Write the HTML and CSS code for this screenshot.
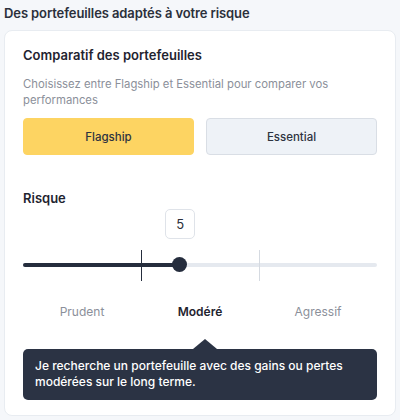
FILE: index.html
```html
<!DOCTYPE html>
<html lang="fr">
<head>
  <meta charset="UTF-8">
  <meta name="viewport" content="width=device-width, initial-scale=1.0">
  <title>Portefeuilles</title>
  <link rel="stylesheet" href="styles.css">
</head>
<body>
<h2 class="page-title">Des portefeuilles adaptés à votre risque</h2>
<div class="card">
  <h3 class="card-title">Comparatif des portefeuilles</h3>
  <p class="desc">Choisissez entre Flagship et Essential pour comparer vos performances</p>
  <div class="choices">
    <button class="choice active">Flagship</button>
    <button class="choice">Essential</button>
  </div>

  <h4 class="risk-title">Risque</h4>
  <div class="value-row">
    <div class="value" style="left: 44.44%;">5</div>
  </div>
  <div class="slider">
    <div class="track"></div>
    <div class="fill" style="width: 44.44%;"></div>
    <div class="tick dark" style="left: 33.33%;"></div>
    <div class="tick" style="left: 66.66%;"></div>
    <div class="thumb" style="left: 44.44%;"></div>
  </div>
  <div class="labels">
    <span>Prudent</span>
    <span class="current">Modéré</span>
    <span>Agressif</span>
  </div>
  <div class="tooltip">
    Je recherche un portefeuille avec des gains ou pertes modérées sur le long terme.
  </div>
</div>
</body>
</html>
```

FILE: styles.css
```css
body {
  margin: 0;
  padding: 0 4px;
  font-family: Inter, "Noto Sans", sans-serif;
  background-color: #f5f7fa;
  color: #2b303b;
}
.page-title {
  margin: 0;
  padding: 5px 0 0 0;
  height: 25px;
  font-size: 13px;
  font-weight: 600;
  letter-spacing: -0.1px;
}
.card {
  background: #fff;
  border: 1px solid #e8ecf1;
  border-radius: 8px;
  padding: 16px 18px 14px 18px;
  height: 354px;
}
.card-title {
  margin: 0;
  font-size: 13px;
  font-weight: 600;
  color: #1f2430;
}
.desc {
  margin: 13px 0 0 0;
  font-size: 11.3px;
  line-height: 16px;
  color: #8b909a;
}
.choices {
  display: grid;
  grid-template-columns: 1fr 1fr;
  gap: 12px;
  margin-top: 10px;
}
.choice {
  height: 37px;
  font-family: inherit;
  font-size: 11.5px;
  font-weight: 500;
  color: #2d3340;
  background-color: #eef2f7;
  border: 1px solid #d9dee5;
  border-radius: 4px;
}
.choice.active {
  background-color: #fdd462;
  border-color: #fdd462;
}
.risk-title {
  margin: 35px 0 0 0;
  font-size: 13px;
  font-weight: 600;
  color: #1f2430;
}
.value-row {
  position: relative;
  height: 30px;
  margin-top: 3px;
}
.value {
  position: absolute;
  top: 0;
  width: 28px;
  height: 28px;
  margin-left: -15px;
  border: 1px solid #dfe3e9;
  border-radius: 5px;
  text-align: center;
  line-height: 28px;
  font-size: 13px;
}
.slider {
  position: relative;
  height: 48px;
  margin-top: 2px;
}
.track, .fill {
  position: absolute;
  left: 0;
  top: 22px;
  height: 4px;
  border-radius: 2px;
}
.track {
  right: 0;
  background-color: #e5e9ef;
}
.fill {
  background-color: #252d3d;
}
.tick {
  position: absolute;
  top: 9px;
  width: 1px;
  height: 31px;
  background-color: #d5dae1;
}
.tick.dark {
  background-color: #252d3d;
}
.thumb {
  position: absolute;
  top: 16px;
  width: 15px;
  height: 15px;
  margin-left: -8px;
  border-radius: 50%;
  background-color: #252d3d;
}
.labels {
  display: grid;
  grid-template-columns: 1fr 1fr 1fr;
  text-align: center;
  font-size: 12px;
  color: #8b909a;
  margin-top: 15px;
}
.labels .current {
  color: #1f2430;
  font-weight: 600;
}
.tooltip {
  position: relative;
  margin-top: 30px;
  background-color: #2b3344;
  color: #fff;
  border-radius: 5px;
  padding: 9px 12px 10px 12px;
  font-size: 12px;
  font-weight: 500;
  line-height: 16px;
}
.tooltip::before {
  content: "";
  position: absolute;
  top: -10px;
  left: 170px;
  border-left: 12px solid transparent;
  border-right: 12px solid transparent;
  border-bottom: 10px solid #2b3344;
}
```
